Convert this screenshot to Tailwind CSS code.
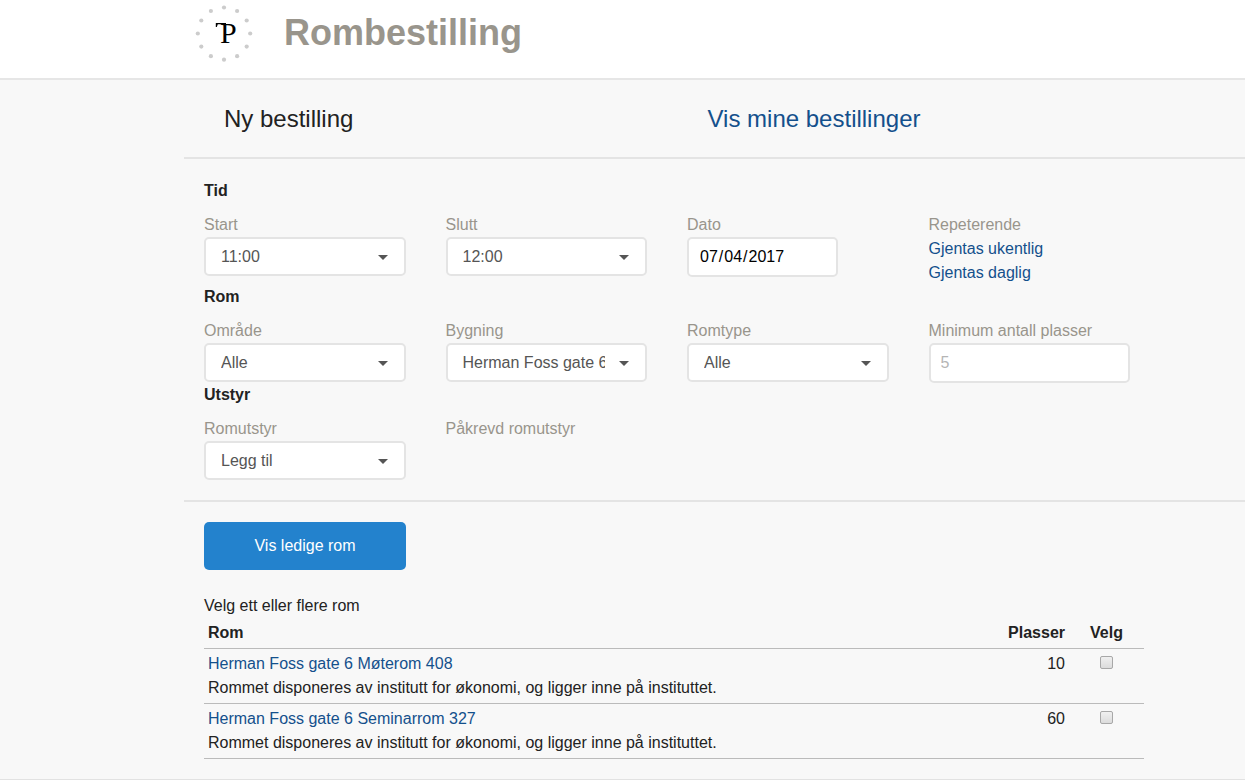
<!DOCTYPE html>
<html lang="nb">
<head>
    <meta charset="UTF-8">
    <meta name="viewport" content="width=device-width, initial-scale=1.0">
    <title>Rombestilling</title>
    <script src="https://cdn.jsdelivr.net/npm/@tailwindcss/browser@4"></script>
</head>
<body class="bg-[#f8f8f8] font-['Liberation_Sans',Arial,sans-serif] text-base leading-6 text-[#222]">
    <header class="bg-white border-b-2 border-[#e6e6e6]">
        <div class="h-[78px] pl-[194px] flex items-start">
            <a href="#" aria-label="Til forsiden" class="pt-1">
                <svg width="60" height="60" viewBox="0 0 60 60">
                    <g fill="#cccccc">
                        <circle cx="30" cy="3.5" r="2.1"/>
                        <circle cx="43.1" cy="7" r="2.1"/>
                        <circle cx="52.7" cy="16.5" r="2.1"/>
                        <circle cx="56.2" cy="29.5" r="2.1"/>
                        <circle cx="52.7" cy="42.6" r="2.1"/>
                        <circle cx="43.1" cy="52.2" r="2.1"/>
                        <circle cx="30" cy="55.7" r="2.1"/>
                        <circle cx="16.9" cy="52.2" r="2.1"/>
                        <circle cx="7.3" cy="42.6" r="2.1"/>
                        <circle cx="3.8" cy="29.5" r="2.1"/>
                        <circle cx="7.3" cy="16.5" r="2.1"/>
                        <circle cx="16.9" cy="7" r="2.1"/>
                    </g>
                    <text x="26" y="39" font-family="Liberation Serif, serif" font-size="30" fill="#000">P</text>
                    <path d="M21.8 23V19H32V20.2H23.8L22.8 23z" fill="#000"/>
                </svg>
            </a>
            <h1 class="pl-[30px] pt-[13px] text-4xl leading-10 font-bold text-[#99958c]">Rombestilling</h1>
        </div>
    </header>

    <main class="pl-[184px] pb-5 border-b border-[#e2e2e2]">
        <!-- Faner -->
        <nav class="border-b-2 border-[#e4e4e4]">
            <div class="grid grid-cols-2 max-w-[967px] pt-[23px] pb-[22px] text-2xl leading-8">
                <span class="pl-10">Ny bestilling</span>
                <a href="#" class="pl-10 text-[#14508c]">Vis mine bestillinger</a>
            </div>
        </nav>

        <form id="bestilling" class="py-5 border-b-2 border-[#e4e4e4]">
            <!-- Tid -->
            <h2 class="pl-5 mb-[10px] font-bold">Tid</h2>
            <div class="grid grid-cols-4 max-w-[966px]">
                <div class="px-5">
                    <label for="start" class="block text-[#99958c]">Start</label>
                    <div class="relative">
                        <select id="start" class="block w-full h-[39px] pl-[15px] pr-10 appearance-none rounded-[5px] border-2 border-[#e4e4e4] bg-white text-[#555]">
                            <option>11:00</option>
                        </select>
                        <svg class="absolute right-[18px] top-[18px] pointer-events-none" width="10" height="5" viewBox="0 0 10 5"><path d="M0 0h10L5 5z" fill="#555"/></svg>
                    </div>
                </div>
                <div class="px-5">
                    <label for="slutt" class="block text-[#99958c]">Slutt</label>
                    <div class="relative">
                        <select id="slutt" class="block w-full h-[39px] pl-[15px] pr-10 appearance-none rounded-[5px] border-2 border-[#e4e4e4] bg-white text-[#555]">
                            <option>12:00</option>
                        </select>
                        <svg class="absolute right-[18px] top-[18px] pointer-events-none" width="10" height="5" viewBox="0 0 10 5"><path d="M0 0h10L5 5z" fill="#555"/></svg>
                    </div>
                </div>
                <div class="px-5">
                    <label for="dato" class="block text-[#99958c]">Dato</label>
                    <input id="dato" type="date" value="2017-07-04" class="block w-3/4 h-10 px-[10px] rounded-[5px] border-2 border-[#e4e4e4] bg-white text-black [&::-webkit-calendar-picker-indicator]:hidden">
                </div>
                <div class="px-5">
                    <span class="block text-[#99958c]">Repeterende</span>
                    <a href="#" class="block text-[#14508c]">Gjentas ukentlig</a>
                    <a href="#" class="block text-[#14508c]">Gjentas daglig</a>
                </div>
            </div>

            <!-- Rom -->
            <h2 class="pl-5 mb-[10px] font-bold">Rom</h2>
            <div class="grid grid-cols-4 max-w-[966px]">
                <div class="px-5">
                    <label for="omrade" class="block text-[#99958c]">Område</label>
                    <div class="relative">
                        <select id="omrade" class="block w-full h-[39px] pl-[15px] pr-10 appearance-none rounded-[5px] border-2 border-[#e4e4e4] bg-white text-[#555]">
                            <option>Alle</option>
                        </select>
                        <svg class="absolute right-[18px] top-[18px] pointer-events-none" width="10" height="5" viewBox="0 0 10 5"><path d="M0 0h10L5 5z" fill="#555"/></svg>
                    </div>
                </div>
                <div class="px-5">
                    <label for="bygning" class="block text-[#99958c]">Bygning</label>
                    <div class="relative">
                        <select id="bygning" class="block w-full h-[39px] pl-[15px] pr-10 appearance-none rounded-[5px] border-2 border-[#e4e4e4] bg-white text-[#555]">
                            <option>Herman Foss gate 6</option>
                        </select>
                        <svg class="absolute right-[18px] top-[18px] pointer-events-none" width="10" height="5" viewBox="0 0 10 5"><path d="M0 0h10L5 5z" fill="#555"/></svg>
                    </div>
                </div>
                <div class="px-5">
                    <label for="romtype" class="block text-[#99958c]">Romtype</label>
                    <div class="relative">
                        <select id="romtype" class="block w-full h-[39px] pl-[15px] pr-10 appearance-none rounded-[5px] border-2 border-[#e4e4e4] bg-white text-[#555]">
                            <option>Alle</option>
                        </select>
                        <svg class="absolute right-[18px] top-[18px] pointer-events-none" width="10" height="5" viewBox="0 0 10 5"><path d="M0 0h10L5 5z" fill="#555"/></svg>
                    </div>
                </div>
                <div class="px-5">
                    <label for="plasser" class="block text-[#99958c]">Minimum antall plasser</label>
                    <input id="plasser" type="text" placeholder="5" class="block w-full h-10 px-[10px] rounded-[5px] border-2 border-[#e4e4e4] bg-white text-black placeholder:text-[#b5b5b5]">
                </div>
            </div>

            <!-- Utstyr -->
            <h2 class="pl-5 mb-[10px] font-bold">Utstyr</h2>
            <div class="grid grid-cols-4 max-w-[966px]">
                <div class="px-5">
                    <label for="romutstyr" class="block text-[#99958c]">Romutstyr</label>
                    <div class="relative">
                        <select id="romutstyr" class="block w-full h-[39px] pl-[15px] pr-10 appearance-none rounded-[5px] border-2 border-[#e4e4e4] bg-white text-[#555]">
                            <option>Legg til</option>
                        </select>
                        <svg class="absolute right-[18px] top-[18px] pointer-events-none" width="10" height="5" viewBox="0 0 10 5"><path d="M0 0h10L5 5z" fill="#555"/></svg>
                    </div>
                </div>
                <div class="px-5">
                    <span class="block text-[#99958c]">Påkrevd romutstyr</span>
                </div>
            </div>
        </form>

        <!-- Ledige rom -->
        <section class="max-w-[980px] px-5 pt-5">
            <button type="submit" form="bestilling" class="block w-[202px] h-12 rounded-[5px] bg-[#2382cd] text-white">Vis ledige rom</button>
            <p class="mt-6">Velg ett eller flere rom</p>
            <table class="w-full border-collapse">
                <thead>
                    <tr class="border-b border-[#bbb]">
                        <th class="px-1 py-[3px] text-left">Rom</th>
                        <th class="px-1 py-[3px] text-right">Plasser</th>
                        <th class="w-[75px] px-1 py-[3px] text-center">Velg</th>
                    </tr>
                </thead>
                <tbody>
                    <tr class="border-b border-[#bbb] align-top">
                        <td class="px-1 py-[3px]">
                            <a href="#" class="block text-[#14508c]">Herman Foss gate 6 Møterom 408</a>
                            Rommet disponeres av institutt for økonomi, og ligger inne på instituttet.
                        </td>
                        <td class="px-1 py-[3px] text-right">10</td>
                        <td class="px-1 py-[7px]">
                            <input type="checkbox" aria-label="Velg Møterom 408" class="block mx-auto size-[13px] appearance-none rounded-[2px] border border-[#a8a8a8] bg-linear-to-b from-[#f0f0f0] to-[#dcdcdc] checked:from-[#2382cd] checked:to-[#2382cd]">
                        </td>
                    </tr>
                    <tr class="border-b border-[#bbb] align-top">
                        <td class="px-1 py-[3px]">
                            <a href="#" class="block text-[#14508c]">Herman Foss gate 6 Seminarrom 327</a>
                            Rommet disponeres av institutt for økonomi, og ligger inne på instituttet.
                        </td>
                        <td class="px-1 py-[3px] text-right">60</td>
                        <td class="px-1 py-[7px]">
                            <input type="checkbox" aria-label="Velg Seminarrom 327" class="block mx-auto size-[13px] appearance-none rounded-[2px] border border-[#a8a8a8] bg-linear-to-b from-[#f0f0f0] to-[#dcdcdc] checked:from-[#2382cd] checked:to-[#2382cd]">
                        </td>
                    </tr>
                </tbody>
            </table>
        </section>
    </main>
</body>
</html>
